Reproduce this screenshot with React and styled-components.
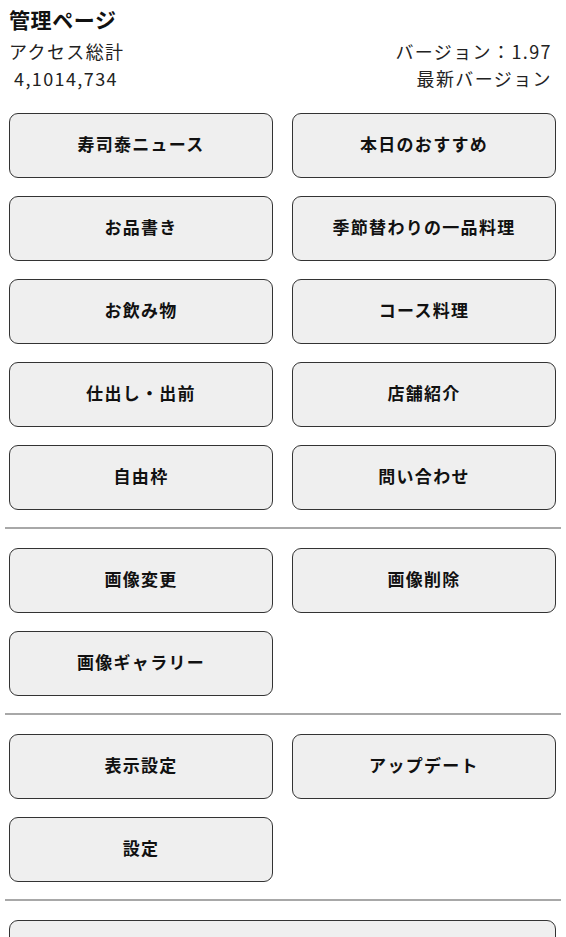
import styled, { createGlobalStyle } from 'styled-components';

const GlobalStyle = createGlobalStyle`
  html, body {
    margin: 0;
    padding: 0;
    background: #fff;
  }
  body {
    font-family: "Noto Sans CJK JP", "Noto Sans", sans-serif;
    color: #111;
  }
`

const Page = styled.div`
  padding: 5px 10px 0 9px;
`
const Title = styled.h1`
  margin: 0;
  font-size: 21px;
  letter-spacing: 0.6px;
  line-height: 28px;
  font-weight: bold;
`
const InfoRow = styled.div`
  display: flex;
  justify-content: space-between;
  margin-top: 5px;
  font-size: 18px;
  letter-spacing: 1.4px;
  line-height: 27px;
  color: #222;
`
const InfoCol = styled.div`
  display: flex;
  flex-direction: column;
  align-items: ${props => (props.right ? 'flex-end' : 'flex-start')};
  padding-right: ${props => (props.right ? '4px' : '0')};
`
const Count = styled.span`
  padding-left: 5px;
`
const Grid = styled.div`
  display: grid;
  grid-template-columns: 264px 264px;
  column-gap: 19px;
  row-gap: 18px;
  margin-top: ${props => props.first ? '21px' : '0'};
`
const MenuButton = styled.button`
  height: 65px;
  padding: 0 0 5px;
  border: 1px solid #333;
  border-radius: 9px;
  background: #efefef;
  font-family: "Noto Sans CJK JP", "Noto Sans", sans-serif;
  font-size: 17px;
  letter-spacing: 1.3px;
  font-weight: bold;
  color: #111;
  grid-column: ${props => (props.wide ? '1 / span 2' : 'auto')};
  cursor: pointer;
`
const Divider = styled.hr`
  margin: 17px -5px 19px -4px;
  border: none;
  border-top: 2px solid #a8a8a8;
`

const sections = [
  ['寿司泰ニュース', '本日のおすすめ', 'お品書き', '季節替わりの一品料理', 'お飲み物', 'コース料理', '仕出し・出前', '店舗紹介', '自由枠', '問い合わせ'],
  ['画像変更', '画像削除', '画像ギャラリー'],
  ['表示設定', 'アップデート', '設定'],
]

export default function App() {
  return (
    <Page>
      <GlobalStyle />
      <Title>管理ページ</Title>
      <InfoRow>
        <InfoCol>
          <span>アクセス総計</span>
          <Count>4,1014,734</Count>
        </InfoCol>
        <InfoCol right>
          <span>バージョン：1.97</span>
          <span>最新バージョン</span>
        </InfoCol>
      </InfoRow>
      {sections.map((items, i) => (
        <div key={i}>
          <Grid first={i === 0}>
            {items.map(label => <MenuButton key={label}>{label}</MenuButton>)}
          </Grid>
          <Divider />
        </div>
      ))}
      <Grid>
        <MenuButton wide aria-label="more" />
      </Grid>
    </Page>
  );
}
